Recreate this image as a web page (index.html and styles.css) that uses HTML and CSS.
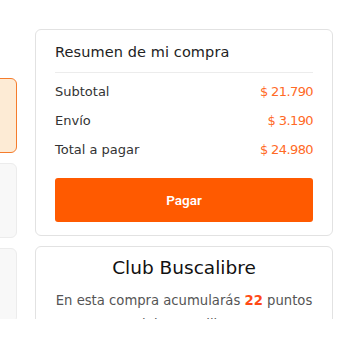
FILE: index.html
```html
<!DOCTYPE html>
<html lang="es">
<head>
<meta charset="utf-8">
<link rel="stylesheet" href="styles.css">
</head>
<body>
<div class="viewport">
  <div class="layout">
    <div class="left-col">
      <div class="mini-card mini-active"></div>
      <div class="mini-card"></div>
      <div class="mini-card"></div>
    </div>
    <div class="right-col">
      <section class="card summary">
        <h2 class="summary-title">Resumen de mi compra</h2>
        <div class="rows">
          <div class="row"><span>Subtotal</span><span class="price">$ 21.790</span></div>
          <div class="row"><span>Envío</span><span class="price">$ 3.190</span></div>
          <div class="row"><span>Total a pagar</span><span class="price">$ 24.980</span></div>
        </div>
        <button class="pay">Pagar</button>
      </section>
      <section class="card club">
        <h2 class="club-title">Club Buscalibre</h2>
        <p class="club-text">En esta compra acumularás <strong>22</strong> puntos Club Buscalibre</p>
      </section>
    </div>
  </div>
</div>
</body>
</html>
```
FILE: styles.css
```css
* { box-sizing: border-box; }
html, body { margin: 0; padding: 0; background: #fff; }
body { font-family: "DejaVu Sans", "Open Sans", sans-serif; color: #333; }
.viewport { width: 350px; height: 319px; overflow: hidden; }
.layout { display: flex; gap: 18px; padding-top: 29px; margin-left: -123px; }
.left-col { width: 140px; flex: none; display: flex; flex-direction: column; gap: 10px; padding-top: 49px; }
.mini-card { height: 75px; border: 1px solid #ececec; background: #f8f8f8; border-radius: 6px; }
.mini-active { border-color: #f57c2c; background: #fdebd5; }
.right-col { width: 298px; flex: none; display: flex; flex-direction: column; gap: 10px; }
.card { border: 1px solid #e2e2e2; border-radius: 6px; background: #fff; }
.summary { padding: 12px 19px 13px; }
.summary-title { margin: 0; font-size: 14.5px; line-height: 20px; font-weight: 400; color: #222; padding-bottom: 10px; border-bottom: 1px solid #ececec; letter-spacing: 0.1px; }
.rows { display: flex; flex-direction: column; gap: 9px; padding-top: 9px; }
.row { display: flex; justify-content: space-between; font-size: 13px; line-height: 20px; color: #333; }
.price { color: #ff6a26; letter-spacing: -0.6px; }
.pay { display: block; width: 100%; height: 44px; margin-top: 18px; border: 0; border-radius: 3px; background: #ff5a00; color: #fff; font-family: Roboto, "Liberation Sans", sans-serif; font-weight: 600; font-size: 13.5px; }
.club { padding: 10px 16px 0; text-align: center; height: 120px; }
.club-title { margin: 0; font-size: 18.5px; line-height: 22px; font-weight: 400; color: #111; }
.club-text { margin: 10px 0 0; font-size: 13.2px; line-height: 24px; color: #555; }
.club-text strong { color: #ff4a16; font-weight: 700; }
```
